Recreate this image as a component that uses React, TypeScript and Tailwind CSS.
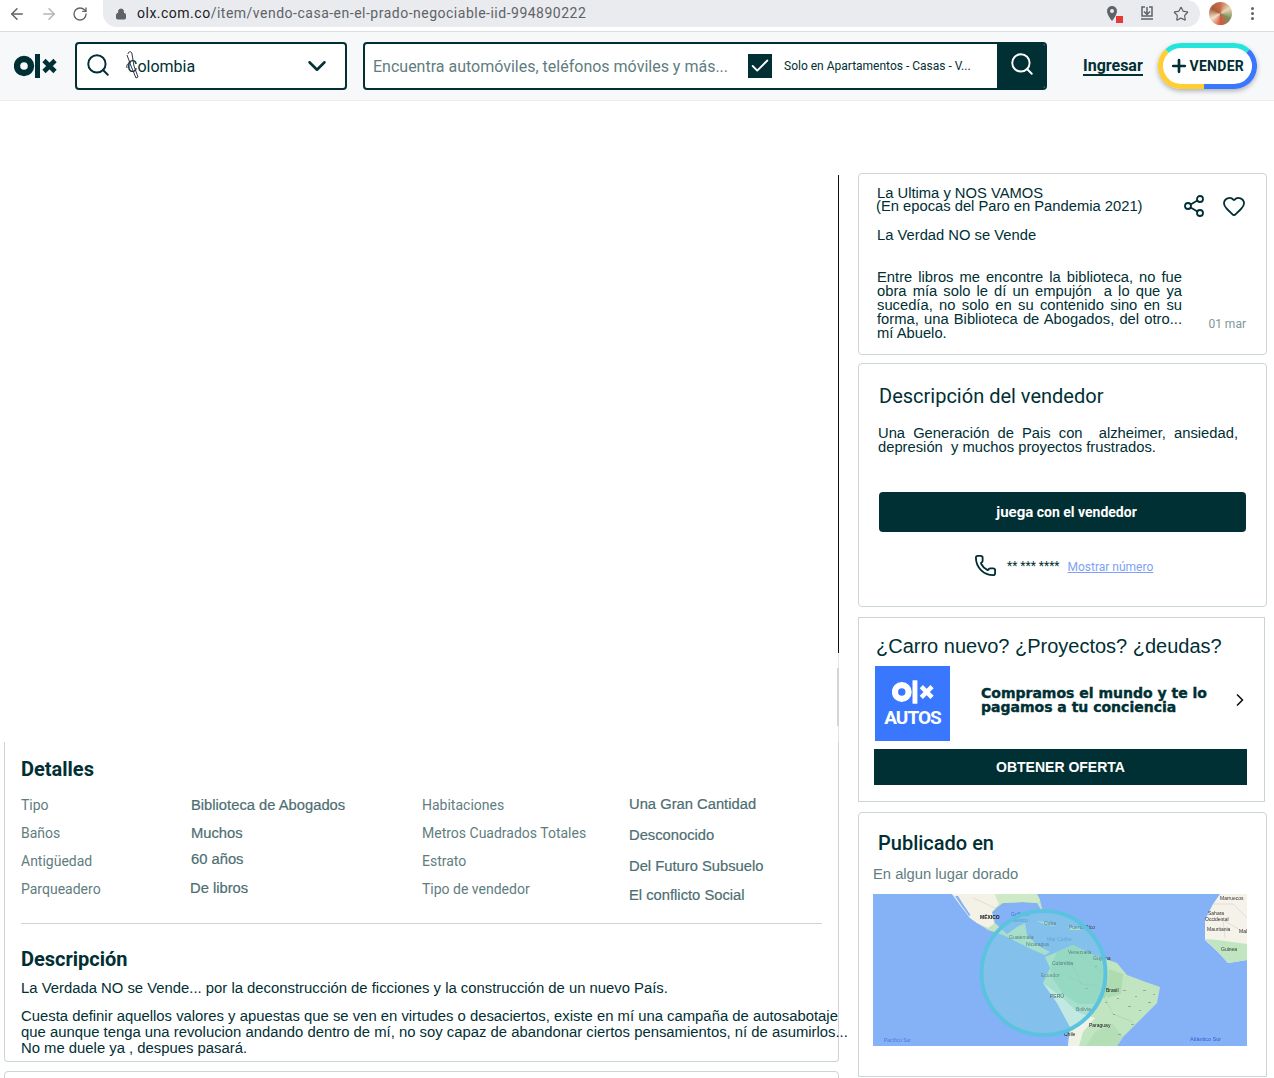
import React from "react";
import { ArrowLeft, ArrowRight, RotateCw, Lock, Star, Search, ChevronDown, Check, Plus, Share2, Heart, Phone, ChevronRight } from "lucide-react";

const Logo = ({ color, className }: { color: string; className: string }) => (
  <svg viewBox="0 0 43 24" className={className} fill="none">
    <circle cx="10" cy="12" r="7" stroke={color} strokeWidth="6.4" />
    <rect x="21" y="0" width="5" height="24" fill={color} />
    <path d="M30 6.500 L41 17.500 M41 6.500 L30 17.500" stroke={color} strokeWidth="4.600" />
  </svg>
);

const MapDrawing = () => (
  <svg viewBox="0 0 374 152" className="block w-[374px] h-[152px] blur-[0.3px]">
    <rect width="374" height="152" fill="#85b2f7" />
    {/* North & Central America */}
    <path d="M79 0 L87 11 L97 24 L104 29 L115 36 L130 41 L144 48 L160 56 L172 61 L177 58 L164 51 L154 41 L152 29 L144 33 L134 40 L122 29 L119 18 L130 9 L150 8 L164 9 L170 19 L167 6 L164 0 Z" fill="#c0e5c0" />
    <path d="M79 0 L87 11 L97 24 L104 29 L115 34 L121 30 L119 18 L126 10 L122 0 Z" fill="#f4f1e6" />
    <path d="M122 0 L126 10 L130 9 L150 8 L164 9 L167 6 L164 0 Z" fill="#cde9c6" />
    <path d="M82 2 L88 11 L96 22 L97.500 21 L90 10 L85 2 Z" fill="#85b2f7" />
    {/* Caribbean */}
    <path d="M163 27 L172 28 L183 32 L174 31 Z M195 33 L206 33 L208 36 L197 36 Z" fill="#c0e5c0" />
    {/* South America */}
    <path d="M172 63 L184 58 L200 51 L220 61 L244 69 L254 81 L270 87 L287 93 L284 109 L267 126 L250 143 L244 152 L195 152 L197 133 L184 109 L170 89 L177 74 Z" fill="#c0e5c0" />
    <path d="M184 58 L200 51 L220 61 L232 66 L236 100 L222 110 L205 110 L190 100 L180 85 L177 74 Z" fill="#a4dbb1" />
    <path d="M170 89 L184 109 L197 133 L195 152 L206 152 L210 138 L222 124 L204 118 L190 104 Z" fill="#eef3e6" />
    <path d="M236 75 L250 80 L248 100 L234 104 Z" fill="#aedcb0" />
    <path d="M213 152 L222 138 L240 130 L250 143 L244 152 Z" fill="#b4dfb6" />
    {/* Africa */}
    <path d="M347 0 L374 0 L374 66 L355 69 L345 58 L332 46 L332 26 L340 10 Z" fill="#f5f2e9" />
    <path d="M332 45 L345 46 L374 50 L374 66 L355 69 L345 58 Z" fill="#c0e5c0" />
    {/* Borders */}
    <g stroke="#9aa0a0" strokeWidth="0.4" fill="none" opacity="0.6">
      <path d="M100 4 L122 14 L140 10 M150 60 L160 62 M195 62 L208 90 L226 92 M226 92 L240 120 L260 128 M205 60 L236 84 M195 82 L210 90" />
      <path d="M340 10 L360 10 L374 24 M332 26 L350 26 L352 44 M350 26 L374 40" />
    </g>
    <g fill="#6f7f78" opacity="0.55">
      <rect x="232" y="108" width="2" height="1" /><rect x="250" y="96" width="3" height="1" /><rect x="262" y="102" width="2" height="1" />
      <rect x="255" y="112" width="3" height="1" /><rect x="240" y="120" width="2" height="1" /><rect x="270" y="96" width="3" height="1" />
      <rect x="280" y="100" width="2" height="1" /><rect x="258" y="130" width="3" height="1" /><rect x="245" y="140" width="3" height="1" />
      <rect x="222" y="72" width="2" height="1" /><rect x="212" y="94" width="3" height="1" /><rect x="230" y="84" width="2" height="1" />
      <rect x="275" y="108" width="3" height="1" /><rect x="266" y="116" width="2" height="1" /><rect x="244" y="104" width="2" height="1" />
    </g>
    {/* Labels */}
    <g fontFamily="'Liberation Sans', sans-serif" fontSize="5">
      <text x="107" y="25" fill="#111" fontWeight="700">MÉXICO</text>
      <text x="138" y="22" fill="#3a6fd8">Golfo de</text>
      <text x="139" y="28" fill="#3a6fd8">México</text>
      <text x="171" y="31" fill="#444">Cuba</text>
      <text x="196" y="35" fill="#444">Puerto Rico</text>
      <text x="136" y="45" fill="#444">Guatemala</text>
      <text x="153" y="52" fill="#444">Nicaragua</text>
      <text x="174" y="47" fill="#4a86c8">Mar Caribe</text>
      <text x="195" y="60" fill="#444">Venezuela</text>
      <text x="220" y="66" fill="#333">Guyana</text>
      <text x="179" y="71" fill="#333">Colombia</text>
      <text x="168" y="83" fill="#555">Ecuador</text>
      <text x="177" y="104" fill="#111">PERÚ</text>
      <text x="233" y="98" fill="#111">Brasil</text>
      <text x="203" y="117" fill="#444">Bolivia</text>
      <text x="216" y="133" fill="#111">Paraguay</text>
      <text x="191" y="142" fill="#111">Chile</text>
      <text x="11" y="148" fill="#4a78d8">Pacífico Sur</text>
      <text x="317" y="147" fill="#2f62c8" fontSize="5.500">Atlántico Sur</text>
      <text x="347" y="6" fill="#333">Marruecos</text>
      <text x="335" y="21" fill="#333">Sahara</text>
      <text x="332" y="27" fill="#333">Occidental</text>
      <text x="334" y="37" fill="#333">Mauritania</text>
      <text x="366" y="39" fill="#333">Mali</text>
      <text x="348" y="57" fill="#333">Guinea</text>
    </g>
    {/* Radius */}
    <circle cx="170.500" cy="79" r="62" fill="#80d8dc" fillOpacity="0.4" stroke="#5bc3df" strokeWidth="4" />
  </svg>
);

const Label = ({ children }: { children: React.ReactNode }) => (
  <div className="h-[28px] leading-[28px] text-[14px] text-[#5f7d80]">{children}</div>
);

export default function App() {
  const pasted = "font-['Liberation_Sans',Arial,sans-serif]";
  const value = "text-[14.75px] leading-[16px] text-[#4d6e72] [-webkit-text-stroke:0.2px_#4d6e72] font-['Liberation_Sans',Arial,sans-serif] whitespace-nowrap";
  return (
    <div className="w-[1274px] h-[1078px] overflow-hidden bg-white text-[#002f34] font-['Roboto',sans-serif]">
      {/* Browser bar */}
      <div className="h-[32px] bg-white border-b border-[#dadce0] flex items-start text-[#5f6368]">
        <div className="flex items-center gap-[14px] pl-[8px] w-[103px] h-[27px]">
          <ArrowLeft size={18} strokeWidth={2} />
          <ArrowRight size={18} strokeWidth={2} className="text-[#b4b7ba]" />
          <RotateCw size={16} strokeWidth={2} />
        </div>
        <div className="w-[1097px] h-[27px] bg-[#e9ebee] rounded-b-[14px] rounded-tr-[14px] flex items-center pl-[12px] pr-[11px]">
          <Lock size={12} fill="#5f6368" strokeWidth={2} />
          <div className="ml-[10px] text-[14px] tracking-[0.5px] text-[#5f6368] whitespace-nowrap">
            <span className="text-[#202124]">olx.com.co</span>/item/vendo-casa-en-el-prado-negociable-iid-994890222
          </div>
          <div className="ml-auto flex items-center gap-[18px]">
            <div className="relative w-[14px] h-[16px]">
              <svg viewBox="0 0 14 16" className="w-[14px] h-[16px]"><path d="M5 0a5 5 0 0 1 5 5c0 4-5 10-5 10S0 9 0 5a5 5 0 0 1 5-5z" fill="#5f6368" /><circle cx="5" cy="5" r="2" fill="#e9ebee" /></svg>
              <div className="absolute right-[-2px] bottom-[-1px] w-[7px] h-[7px] bg-[#e53935]" />
            </div>
            <svg viewBox="0 0 16 16" className="w-[16px] h-[16px]" fill="none" stroke="#5f6368" strokeWidth="1.500"><path d="M6 1H3v9h10V1h-3M8 1v7M5 5.500 8 8.500 11 5.500M2 13h12" /></svg>
            <Star size={16} strokeWidth={1.8} />
          </div>
        </div>
        <div className="flex items-center h-[27px] pl-[9px]">
          <div className="w-[23px] h-[23px] rounded-full bg-[conic-gradient(#c96f4a,#e8d9b8,#7c8f5a,#d9573f,#efe3c8,#a85d3c,#c96f4a)]" />
          <div className="ml-[19px] flex flex-col gap-[2px]">
            <div className="w-[3px] h-[3px] rounded-full bg-[#5f6368]" />
            <div className="w-[3px] h-[3px] rounded-full bg-[#5f6368]" />
            <div className="w-[3px] h-[3px] rounded-full bg-[#5f6368]" />
          </div>
        </div>
      </div>

      {/* OLX header */}
      <div className="h-[69px] bg-[#f7f8f9] border-b border-[#ebeeef] flex items-center pl-[14px] pb-[1px]">
        <Logo color="#002f34" className="w-[43px] h-[24px]" />
        <div className="ml-[18px] w-[272px] h-[48px] bg-white border-2 border-[#002f34] rounded-[4px] flex items-center pl-[8px] pr-[15px] relative">
          <Search size={26} strokeWidth={1.8} className="-mt-[2px] shrink-0" />
          <span className="ml-[16px] text-[16px] pt-[2px]">Colombia</span>
          <ChevronDown size={30} strokeWidth={2} className="ml-auto -mr-[2px]" />
          <svg viewBox="0 0 16 30" className="absolute left-[47px] top-[6px] w-[16px] h-[30px]" fill="none" stroke="#334" strokeWidth="1"><path d="M4 4c0-3 4-3 4 0l2 12 4 11-2 1-5-12L3 5M7 12c-3 1-5 3-4 6" /></svg>
        </div>
        <div className="ml-[16px] w-[684px] h-[48px] bg-white border-2 border-[#002f34] rounded-[4px] flex items-center pl-[8px] overflow-hidden">
          <span className="text-[16px] text-[#5f7d80] w-[375px] shrink-0 whitespace-nowrap pt-[2px]">Encuentra automóviles, teléfonos móviles y más...</span>
          <div className="w-[24px] h-[24px] bg-[#002f34] flex items-center justify-center shrink-0">
            <Check size={22} strokeWidth={2} color="#fff" />
          </div>
          <span className="ml-[12px] text-[12px] whitespace-nowrap w-[213px] shrink-0">Solo en Apartamentos - Casas - V...</span>
          <div className="w-[48px] h-full bg-[#002f34] flex items-center justify-center shrink-0">
            <Search size={26} strokeWidth={1.8} color="#fff" className="-mt-[3px] ml-[1px]" />
          </div>
        </div>
        <span className="ml-[36px] text-[16px] font-bold leading-[16px] pt-[2px] border-b-2 border-[#002f34]">Ingresar</span>
        <div className="ml-[15px] relative w-[99px] h-[46px] rounded-full bg-white shadow-[0_2px_5px_rgba(0,0,0,0.3)] flex items-center justify-center">
          <svg viewBox="0 0 99 46" className="absolute inset-0 w-[99px] h-[46px]" fill="none" strokeWidth="5">
            <path d="M46 43.500H23A20.500 20.500 0 0 1 9 8" stroke="#ffce32" />
            <path d="M9 8A20.500 20.500 0 0 1 23 2.500H76A20.500 20.500 0 0 1 90 8" stroke="#23e5db" />
            <path d="M90 8A20.500 20.500 0 0 1 76 43.500H46" stroke="#3a77ff" />
          </svg>
          <Plus size={20} strokeWidth={3.2} className="relative -ml-[1px] shrink-0" />
          <span className="relative text-[14px] font-bold tracking-[0.3px] mt-[2px]">VENDER</span>
        </div>
      </div>

      {/* Body */}
      <div className="flex items-start pl-[4px]">
        <div className="w-[835px] shrink-0">
          <div className="h-[641px] flex flex-col items-end pt-[74px]">
            <div className="w-[1px] h-[478px] bg-[#111]" />
            <div className="w-[1px] h-[15px] bg-[#e3e8e8]" />
            <div className="w-[2px] h-[58px] bg-[#d4d6d6]" />
            <div className="w-[1px] h-[16px] bg-[#dfe5e5]" />
          </div>
          <div className="h-[320px] border border-t-0 border-[#ccd5d6] rounded-b-[4px] pl-[16px] pt-[14px]">
            <h2 className="text-[20px] font-bold leading-[26px]">Detalles</h2>
            <div className="flex mt-[9px] h-[129px]">
              <div className="w-[170px]">
                <Label>Tipo</Label>
                <Label>Baños</Label>
                <Label>Antigüedad</Label>
                <Label>Parqueadero</Label>
              </div>
              <div className="w-[231px] pt-[6px]">
                <div className={value}>Biblioteca de Abogados</div>
                <div className={`${value} mt-[12px]`}>Muchos</div>
                <div className={`${value} mt-[10px]`}>60 años</div>
                <div className={`${value} mt-[13px] -ml-[1px]`}>De libros</div>
              </div>
              <div className="w-[207px]">
                <Label>Habitaciones</Label>
                <Label>Metros Cuadrados Totales</Label>
                <Label>Estrato</Label>
                <Label>Tipo de vendedor</Label>
              </div>
              <div className="pt-[5px]">
                <div className={value}>Una Gran Cantidad</div>
                <div className={`${value} mt-[15px]`}>Desconocido</div>
                <div className={`${value} mt-[15px]`}>Del Futuro Subsuelo</div>
                <div className={`${value} mt-[13px]`}>El conflicto Social</div>
              </div>
            </div>
            <div className="w-[801px] h-px bg-[#ccd5d6] mt-[3px]" />
            <h2 className="text-[20px] font-bold leading-[26px] mt-[22px]">Descripción</h2>
            <p className={`${pasted} text-[14.85px] leading-[16px] mt-[8px] whitespace-nowrap`}>La Verdada NO se Vende... por la deconstrucción de ficciones y la construcción de un nuevo País.</p>
            <p className={`${pasted} text-[14.85px] leading-[16px] mt-[12px] whitespace-nowrap`}>
              Cuesta definir aquellos valores y apuestas que se ven en virtudes o desaciertos, existe en mí una campaña de autosabotaje
              <br />que aunque tenga una revolucion andando dentro de mí, no soy capaz de abandonar ciertos pensamientos, ní de asumirlos...
              <br />No me duele ya , despues pasará.
            </p>
          </div>
          <div className="mt-[9px] h-[40px] border border-[#ccd5d6] rounded-t-[4px]" />
        </div>

        {/* Right column */}
        <div className="ml-[19px] w-[409px] shrink-0 pt-[72px]">
          <div className="h-[182px] border border-[#ccd5d6] rounded-[4px] relative pl-[18px] pt-[13px]">
            <div className={`${pasted} text-[14.75px] leading-[13px]`}>
              La Ultima y NOS VAMOS
              <br /><span className="-ml-[1px]">(En epocas del Paro en Pandemia 2021)</span>
            </div>
            <div className={`${pasted} text-[14.75px] leading-[16px] mt-[14px]`}>La Verdad NO se Vende</div>
            <p className={`${pasted} text-[14.75px] leading-[14px] w-[305px] text-justify [text-align-last:justify] mt-[27px]`}>
              Entre libros me encontre la biblioteca, no fue obra mía solo le dí un empujón&nbsp; a lo que ya sucedía, no solo en su contenido sino en su forma, una Biblioteca de Abogados, del otro...
            </p>
            <p className={`${pasted} text-[14.75px] leading-[14px]`}>mí Abuelo.</p>
            <Share2 size={24} strokeWidth={1.8} className="absolute left-[323px] top-[20px]" />
            <Heart size={24} strokeWidth={1.8} className="absolute left-[363px] top-[20px]" />
            <span className="absolute right-[20px] top-[141px] text-[12px] text-[#7f9799]">01 mar</span>
          </div>

          <div className="mt-[8px] h-[244px] border border-[#ccd5d6] rounded-[4px] pl-[20px] pr-[20px] pt-[19px]">
            <h2 className="text-[20px] leading-[26px]">Descripción del vendedor</h2>
            <p className={`${pasted} text-[14.75px] leading-[14px] text-justify w-[360px] -ml-[1px] mt-[17px]`}>
              Una Generación de Pais con&nbsp; alzheimer, ansiedad, depresión&nbsp; y muchos proyectos frustrados.
            </p>
            <div className="mt-[38px] h-[40px] w-[367px] bg-[#002f34] rounded-[4px] flex items-center justify-center pl-[8px] text-white font-bold text-[14px]">
              <span className="text-[15px]">juega</span>&nbsp;con el vendedor
            </div>
            <div className="flex items-center mt-[25px] pl-[95px]">
              <Phone size={23} strokeWidth={1.9} className="-mt-[3px]" />
              <span className="ml-[10px] text-[12px] leading-[12px] -mt-[3px]">** *** ****</span>
              <span className="ml-[8px] text-[12px] text-[#7ea2f5] underline">Mostrar número</span>
            </div>
          </div>

          <div className="mt-[10px] h-[185px] w-[407px] border border-[#ccd5d6] pl-[16px] pt-[15px]">
            <h2 className={`${pasted} text-[20px] leading-[26px] ml-[1px]`}>¿Carro nuevo? ¿Proyectos? ¿deudas?</h2>
            <div className="flex items-center mt-[7px]">
              <div className="w-[75px] h-[75px] bg-[#3a77ff] flex flex-col items-center justify-center shrink-0">
                <Logo color="#fff" className="w-[42px] h-[24px]" />
                <span className="text-white text-[19px] font-bold leading-[20px] tracking-[-1px] mt-[4px]">AUTOS</span>
              </div>
              <div className="ml-[31px] w-[248px] text-[14px] leading-[14px] font-bold font-['DejaVu_Sans',sans-serif] [-webkit-text-stroke:0.4px_#002f34] -mt-[8px] whitespace-nowrap">
                Compramos el mundo y te lo
                <br />pagamos a tu conciencia
              </div>
              <ChevronRight size={20} strokeWidth={2} className="text-[#111] ml-[1px] -mt-[8px]" />
            </div>
            <div className={`${pasted} mt-[8px] w-[373px] -ml-[1px] h-[36px] bg-[#002f34] flex items-center justify-center text-white font-bold text-[14px]`}>
              OBTENER OFERTA
            </div>
          </div>

          <div className="mt-[10px] h-[265px] border border-[#ccd5d6] rounded-t-[4px] pl-[14px] pt-[17px]">
            <h2 className="text-[20px] font-medium leading-[26px] ml-[5px]">Publicado en</h2>
            <p className={`${pasted} text-[14.75px] leading-[16px] text-[#5f7d80] mt-[10px]`}>En algun lugar dorado</p>
            <div className="mt-[12px]">
              <MapDrawing />
            </div>
          </div>
        </div>
      </div>
    </div>
  );
}
